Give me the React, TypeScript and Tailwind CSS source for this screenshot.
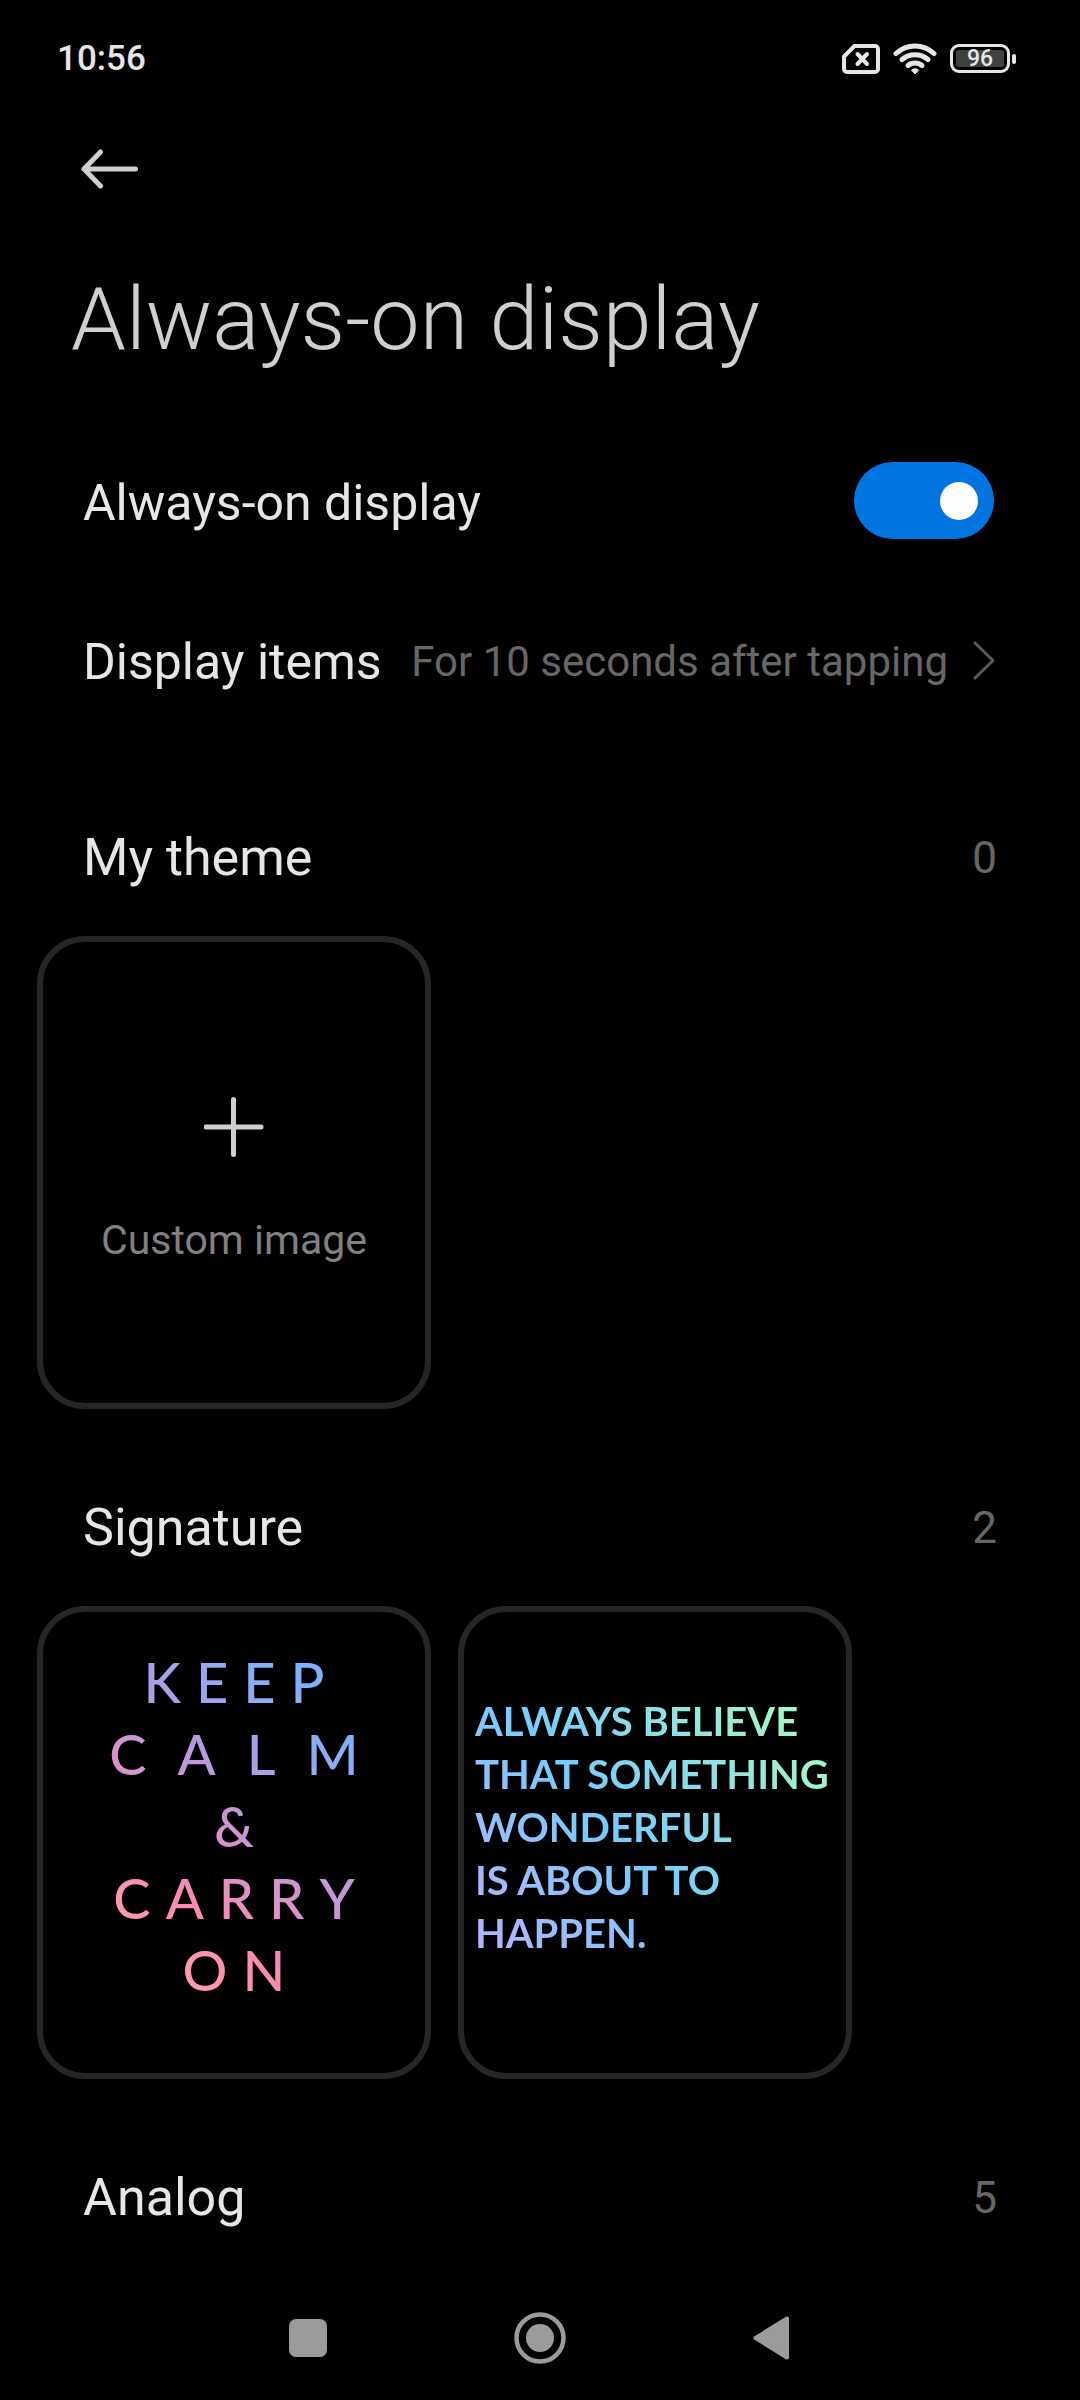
import { useState, type ReactNode } from "react";

const KEEP_CALM = [
  { word: "KEEP", gap: "gap-[15px]" },
  { word: "CALM", gap: "gap-[31px]" },
  { word: "&", gap: "gap-0" },
  { word: "CARRY", gap: "gap-[15px]" },
  { word: "ON", gap: "gap-[15px]" },
];

const BELIEVE = ["ALWAYS BELIEVE", "THAT SOMETHING", "WONDERFUL", "IS ABOUT TO", "HAPPEN."];

function StatusBar() {
  return (
    <div className="flex h-[117px] items-center justify-between pl-[57px] pr-16 text-[#e6e6e6]">
      <span className="text-[35px] font-medium leading-[42px]">10:56</span>
      <div className="flex items-center gap-[13px]">
        <svg className="h-[30px] w-[38px]" viewBox="0 0 38 30" fill="none" stroke="currentColor" aria-label="No SIM">
          <path d="M12.500 2H33a3 3 0 0 1 3 3v20a3 3 0 0 1-3 3H5a3 3 0 0 1-3-3V12.500Z" strokeWidth="4" strokeLinejoin="round" />
          <path d="m15.500 10 9.500 10M25 10l-9.500 10" strokeWidth="4" strokeLinecap="round" />
        </svg>
        <svg className="h-[32px] w-[44px]" viewBox="0 0 44 32" fill="none" stroke="currentColor" strokeWidth="5" aria-label="Wi-Fi">
          <path d="M3 10.500C14 .5 30 .5 41 10.500" strokeLinecap="round" />
          <path d="M9 16.500c7.500-6.500 18.500-6.500 26 0" strokeLinecap="round" />
          <path d="M15 22.500c4-3.500 10-3.500 14 0" strokeLinecap="round" />
          <path d="M18.500 27.200a5 5 0 0 1 7 0L22 31Z" fill="currentColor" strokeWidth="1" strokeLinejoin="round" />
        </svg>
        <div className="flex items-center gap-[2px]">
          <div className="h-[29px] w-[60px] rounded-[9px] border-3 border-current p-[3px]">
            <div className="flex h-[17px] items-center justify-center rounded-[3px] bg-[#404040] text-[23px] font-medium leading-[17px]">
              96
            </div>
          </div>
          <div className="h-[10px] w-1 rounded-[2px] bg-current" />
        </div>
      </div>
    </div>
  );
}

function Section({ title, count, children }: { title: string; count: number; children?: ReactNode }) {
  return (
    <section className="pt-[41px]">
      <div className="flex h-[156px] items-center justify-between px-[83px]">
        <h2 className="text-[52px] leading-[60px] text-[#e6e6e6]">{title}</h2>
        <span className="text-[44px] leading-[60px] text-[#666666]">{count}</span>
      </div>
      {children && <div className="flex gap-[27px] px-[37px]">{children}</div>}
    </section>
  );
}

function ThemeCard({ label, children }: { label?: string; children: ReactNode }) {
  return (
    <button
      type="button"
      aria-label={label}
      className="flex h-[473px] w-[394px] shrink-0 flex-col rounded-[48px] border-6 border-[#262626]"
    >
      {children}
    </button>
  );
}

export default function App() {
  const [enabled, setEnabled] = useState(true);

  return (
    <div className="flex min-h-screen flex-col bg-black font-[Roboto,sans-serif]">
      <StatusBar />

      <header>
        <div className="flex h-[104px] items-center px-20">
          <button type="button" aria-label="Back">
            <svg
              className="h-10 w-[60px]"
              viewBox="0 0 60 40"
              fill="none"
              stroke="#cfcfcf"
              strokeWidth="5"
              strokeLinecap="round"
              strokeLinejoin="round"
            >
              <path d="M55.500 20H4M20.500 3 4 20l16.500 17" />
            </svg>
          </button>
        </div>
        <h1 className="px-[71px] pb-[50px] pt-[46px] text-[88px] font-light leading-[104px] text-[#cfcfcf]">
          Always-on display
        </h1>
      </header>

      <main className="flex-1">
        <label className="flex h-[159px] items-center justify-between pl-[83px] pr-[86px]">
          <span className="pt-1 text-[50px] leading-[60px] text-[#e6e6e6]">Always-on display</span>
          <input
            type="checkbox"
            role="switch"
            checked={enabled}
            onChange={(e) => setEnabled(e.target.checked)}
            className="flex h-[77px] w-[140px] appearance-none items-center rounded-full bg-[#333333] px-4 before:size-[38px] before:rounded-full before:bg-white before:content-[''] checked:justify-end checked:bg-[#0074e0]"
          />
        </label>

        <button type="button" className="flex h-[159px] w-full items-center pl-[83px] pr-[85px]">
          <span className="pt-1 text-[50px] leading-[60px] text-[#e6e6e6]">Display items</span>
          <span className="ml-auto pt-1 text-[42px] leading-[60px] text-[#666666]">For 10 seconds after tapping</span>
          <svg
            className="ml-[25px] h-10 w-[22px]"
            viewBox="0 0 22 40"
            fill="none"
            stroke="#595959"
            strokeWidth="3"
            strokeLinecap="round"
            strokeLinejoin="round"
          >
            <path d="m2 3 18 17.500L2 38" />
          </svg>
        </button>

        <Section title="My theme" count={0}>
          <ThemeCard>
            <span className="flex w-full flex-col items-center pt-[155px]">
              <svg className="size-[60px]" viewBox="0 0 60 60" stroke="#cfcfcf" strokeWidth="5" strokeLinecap="round">
                <path d="M29.500 2.500v55M2 30h55" />
              </svg>
              <span className="mt-[53px] text-[41px] leading-[60px] text-[#808080]">Custom image</span>
            </span>
          </ThemeCard>
        </Section>

        <Section title="Signature" count={2}>
          <ThemeCard label="Keep calm & carry on">
            <span className="mx-auto mt-[34px] flex w-[260px] flex-col bg-linear-[40deg,#ffa3a8_10%,#fb8bb2_30%,#b79be0_58%,#7ab4ff_85%] bg-clip-text font-[Lato,sans-serif] text-[56px] font-medium leading-[72px] text-transparent">
              {KEEP_CALM.map(({ word, gap }) => (
                <span key={word} className={`flex justify-center ${gap}`}>
                  {word.split("").map((letter, i) => (
                    <span key={i}>{letter}</span>
                  ))}
                </span>
              ))}
            </span>
          </ThemeCard>
          <ThemeCard label="Always believe that something wonderful is about to happen">
            <span className="ml-[11px] mt-[83px] flex flex-col bg-linear-[50deg,#b9b0f8_0%,#76ccff_42%,#a8f8c4_90%] bg-clip-text text-left font-[Lato,sans-serif] text-[40px] font-bold leading-[53px] text-transparent">
              {BELIEVE.map((line) => (
                <span key={line} className="whitespace-nowrap">
                  {line}
                </span>
              ))}
            </span>
          </ThemeCard>
        </Section>

        <Section title="Analog" count={5} />
      </main>

      <nav className="flex h-[124px] items-center justify-center gap-[180px]">
        <button type="button" aria-label="Recent apps">
          <svg className="size-[52px]" viewBox="0 0 52 52" fill="#9b9b9b">
            <rect x="7" y="7" width="38" height="38" rx="7" />
          </svg>
        </button>
        <button type="button" aria-label="Home">
          <svg className="size-[52px]" viewBox="0 0 52 52" fill="#9b9b9b">
            <circle cx="26" cy="26" r="23.500" fill="none" stroke="#9b9b9b" strokeWidth="4.500" />
            <circle cx="26" cy="26" r="14" />
          </svg>
        </button>
        <button type="button" aria-label="Back to previous screen">
          <svg className="size-[52px]" viewBox="0 0 52 52" fill="#9b9b9b" stroke="#9b9b9b" strokeWidth="4" strokeLinejoin="round">
            <path d="M41 6.500v39L9.500 26Z" />
          </svg>
        </button>
      </nav>
    </div>
  );
}
